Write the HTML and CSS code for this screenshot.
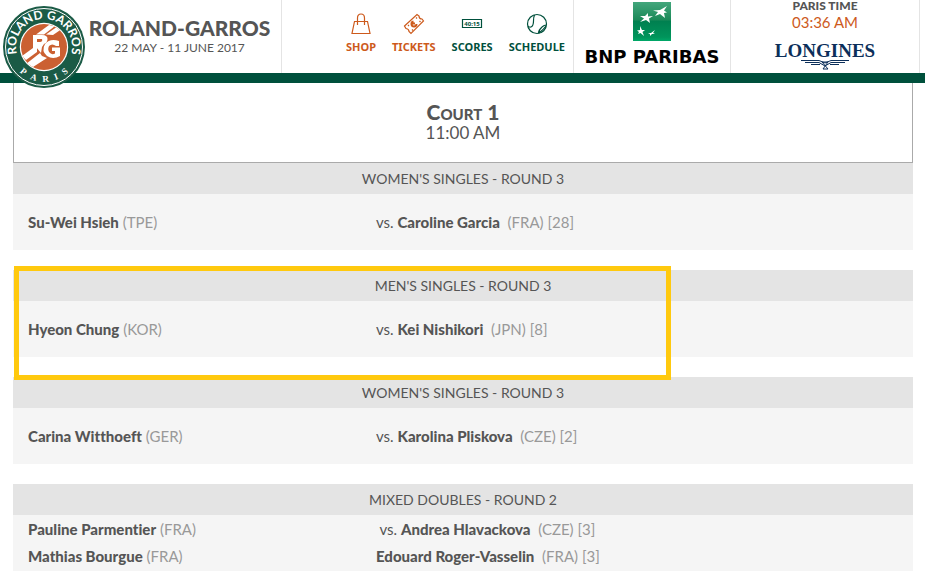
FILE: index.html
```
<!DOCTYPE html>
<html lang="en">
<head>
    <meta charset="UTF-8" />
    <meta name="viewport" content="width=device-width, initial-scale=1.0" />
    <title>Roland-Garros - Schedule</title>
    <link rel="stylesheet" href="styles.css">
</head>
<body>
    <header class="header">
        <div class="brand">
            <svg class="brand-logo" viewBox="0 0 84 84" role="img" aria-label="Roland Garros Paris">
                <defs>
                    <path id="arcTop" d="M 21.200 60.750 A 28 28 0 1 1 62.800 60.750" />
                    <path id="arcBottom" d="M 7 42 A 35 35 0 0 0 77 42" />
                    <clipPath id="disc"><circle cx="42" cy="42" r="23" /></clipPath>
                </defs>
                <circle cx="42" cy="42" r="41" fill="#1b5b46" />
                <circle cx="42" cy="42" r="38.5" fill="none" stroke="#fff" stroke-width="1" />
                <circle cx="42" cy="42" r="24.2" fill="#fff" />
                <circle cx="42" cy="42" r="23" fill="#cb6032" />
                <g clip-path="url(#disc)" fill="#fff">
                    <path d="M34 29.500 L47 20 L53 21 L42 29.500 Z" />
                    <path d="M44 29.500 L54 22.500 L59 24.500 L51 30 Z" />
                    <path d="M31 30 H40 Q46 30 45.500 34.500 Q45 38 42 39 L40 42 L39 48 L34 42 V37 H38 Q41 36.500 40 34 H35 V47 L24 55 L20 51 L31 43 Z" />
                    <path d="M24 59 L38 48 L40 51 L45 53 L31 62 Z" />
                    <path d="M57 36 V41 H54 Q50 38 47 41 Q45 45 48 48 Q50 50 53 48.500 V46 H50 V42.500 H58 V51 Q51 55 45 51 Q39 46 43 39 Q48 33 57 36 Z" />
                </g>
                <text class="logo-name"><textPath href="#arcTop" startOffset="50%" text-anchor="middle">ROLAND GARROS</textPath></text>
                <text class="logo-city"><textPath href="#arcBottom" startOffset="50%" text-anchor="middle">P&#160;&#160;&#160;A&#160;&#160;&#160;R&#160;&#160;&#160;I&#160;&#160;&#160;S</textPath></text>
            </svg>
            <div class="brand-text">
                <h1>ROLAND-GARROS</h1>
                <p>22 MAY - 11 JUNE 2017</p>
            </div>
        </div>

        <nav class="nav">
            <a href="#" class="orange">
                <svg width="22" height="22" viewBox="0 0 22 22">
                    <path d="M4.500 8.500 H17.500 L20 20.500 H2 Z M7.500 12 V5 Q7.500 1 11 1 Q14.500 1 14.500 5 V12" />
                </svg>
                SHOP
            </a>
            <a href="#" class="orange">
                <svg width="22" height="22" viewBox="0 0 22 22">
                    <path d="M1.500 13 L14 1.500 L16 3 Q16 6 19 6 L20.500 8 L8 20.500 L6 18.500 Q6 16 3 15.500 Z" />
                    <path d="M13.500 11 A2.500 2.500 0 1 1 10.500 8.500 M9.500 10.500 H12" stroke-width="2" />
                    <path d="M13 4.500 L14 5.500 M16.500 8 L17.500 9 M5 12 L6 13 M9 16.500 L10 17.500" />
                </svg>
                TICKETS
            </a>
            <a href="#">
                <svg width="22" height="22" viewBox="0 0 22 22">
                    <path d="M1.500 6.500 H20.500 V14.500 H1.500 Z" />
                    <text x="11" y="13" text-anchor="middle" class="icon-score">40:15</text>
                </svg>
                SCORES
            </a>
            <a href="#">
                <svg width="22" height="22" viewBox="0 0 22 22">
                    <circle cx="11" cy="11" r="9.500" />
                    <path d="M8.500 2 Q7.500 4 7.500 8 Q7.500 13 5 14 Q3 14.500 2 13 M20.500 12 Q18 12 16 14 Q12.500 17 12.500 20.500 M13 20 Q17 17 20 13" />
                </svg>
                SCHEDULE
            </a>
        </nav>

        <div class="sponsor">
            <svg width="38" height="39" viewBox="0 0 38 39" aria-hidden="true">
                <defs>
                    <linearGradient id="bnpGreen" x1="0" y1="0" x2="0" y2="1">
                        <stop offset="0" stop-color="#43a67c" />
                        <stop offset="0.45" stop-color="#1c8a59" />
                        <stop offset="0.5" stop-color="#008050" />
                        <stop offset="0.9" stop-color="#00945b" />
                        <stop offset="1" stop-color="#00a868" />
                    </linearGradient>
                </defs>
                <rect width="38" height="39" fill="url(#bnpGreen)" />
                <g fill="#fff">
                    <path d="M20 8.500 L27 8 L34 4 L31 8.500 L34 10.500 L31 11 L32 16 L27 12 L22 14 L25 10 Z" />
                    <path d="M7 14 L12 14 L15 11 L15 14.500 L20 14 L16 16.500 L17 21 L13 18 L7 20 L11 16.500 Z" />
                    <path d="M4 28.500 L7 28 L7 24 L9 28 L12 28 L9.500 30 L11 34 L7.500 31 L5 32 L6 30 Z" />
                    <path d="M15 31 L18 31 L22 28 L20 31 L22 32 L19 32 L17 34 L17 32 Z" />
                </g>
            </svg>
            <span class="bnp">BNP PARIBAS</span>
        </div>

        <div class="clock">
            <span class="clock-label">PARIS TIME</span>
            <span class="clock-time">03:36 AM</span>
            <span class="longines">LONGINES</span>
            <svg class="wings" width="48" height="10" viewBox="0 0 48 10" aria-hidden="true">
                <path d="M0 0.500 H18 L24 3 L30 0.500 H48 M4 2.500 H18 L24 6 L30 2.500 H44 M10 4.500 H19 M29 4.500 H38" />
                <path d="M21 2 H27 L22 9 H27 L21 2" />
            </svg>
        </div>
    </header>

    <main class="schedule">
        <div class="court">
            <h2>Court 1</h2>
            <p>11:00 AM</p>
        </div>

        <table class="match">
            <colgroup><col class="home"><col></colgroup>
            <thead>
                <tr><th colspan="2">WOMEN'S SINGLES - ROUND 3</th></tr>
            </thead>
            <tbody>
                <tr>
                    <td><b>Su-Wei Hsieh</b> <span>(TPE)</span></td>
                    <td>vs. <b>Caroline Garcia</b> &nbsp;<span>(FRA) [28]</span></td>
                </tr>
            </tbody>
        </table>

        <div class="highlight">
            <table class="match">
                <colgroup><col class="home"><col></colgroup>
                <thead>
                    <tr><th colspan="2">MEN'S SINGLES - ROUND 3</th></tr>
                </thead>
                <tbody>
                    <tr>
                        <td><b>Hyeon Chung</b> <span>(KOR)</span></td>
                        <td>vs. <b>Kei Nishikori</b> &nbsp;<span>(JPN) [8]</span></td>
                    </tr>
                </tbody>
            </table>
        </div>

        <table class="match">
            <colgroup><col class="home"><col></colgroup>
            <thead>
                <tr><th colspan="2">WOMEN'S SINGLES - ROUND 3</th></tr>
            </thead>
            <tbody>
                <tr>
                    <td><b>Carina Witthoeft</b> <span>(GER)</span></td>
                    <td>vs. <b>Karolina Pliskova</b> &nbsp;<span>(CZE) [2]</span></td>
                </tr>
            </tbody>
        </table>

        <table class="match">
            <colgroup><col class="home"><col></colgroup>
            <thead>
                <tr><th colspan="2">MIXED DOUBLES - ROUND 2</th></tr>
            </thead>
            <tbody>
                <tr>
                    <td>
                        <b>Pauline Parmentier</b> <span>(FRA)</span><br>
                        <b>Mathias Bourgue</b> <span>(FRA)</span>
                    </td>
                    <td>
                        &nbsp;vs. <b>Andrea Hlavackova</b> &nbsp;<span>(CZE) [3]</span><br>
                        <b>Edouard Roger-Vasselin</b> &nbsp;<span>(FRA) [3]</span>
                    </td>
                </tr>
            </tbody>
        </table>
    </main>
</body>
</html>
```
FILE: styles.css
```
body {
    margin: 0;
    background: #fff;
    color: #555;
    font-family: Lato, "Open Sans", sans-serif;
    font-size: 15px;
    font-variant-ligatures: none;
}

h1, h2, p {
    margin: 0;
}

/* header */
.header {
    display: flex;
    box-sizing: border-box;
    height: 83px;
    padding-right: 5px;
    border-bottom: 10px solid #00503c;
}

.brand,
.nav,
.sponsor,
.clock {
    box-sizing: border-box;
    border-right: 1px solid #e4e4e4;
}

.brand {
    position: relative;
    width: 282px;
    padding: 16px 10px 0 88px;
}

.brand-logo {
    position: absolute;
    left: 2px;
    top: 5px;
    width: 84px;
    height: 84px;
}

.brand-logo text {
    fill: #fff;
    font-weight: bold;
}

.logo-name {
    font-family: Lato, sans-serif;
    font-size: 12px;
}

.logo-city {
    font-family: "Liberation Serif", serif;
    font-size: 9px;
}

.brand-text {
    text-align: center;
}

.brand-text h1 {
    font-size: 21px;
    line-height: 24px;
    font-weight: 900;
}

.brand-text p {
    font-size: 12px;
    line-height: 16px;
}

.nav {
    display: flex;
    flex: 1;
    justify-content: flex-end;
    gap: 16px;
    padding: 13px 8px 0 0;
}

.nav a {
    display: flex;
    flex-direction: column;
    align-items: center;
    gap: 4px;
    color: #00503c;
    font-family: "Noto Sans", sans-serif;
    font-size: 11px;
    line-height: 16px;
    font-weight: bold;
    text-decoration: none;
}

.nav a.orange {
    color: #cd5a1c;
}

.nav svg {
    fill: none;
    stroke: currentColor;
    stroke-width: 1.2;
}

.nav .icon-score {
    fill: currentColor;
    stroke: none;
    font-size: 6px;
}

.sponsor {
    display: flex;
    flex-direction: column;
    align-items: center;
    width: 157px;
    padding-top: 2px;
}

.bnp {
    color: #000;
    font-family: "DejaVu Sans", sans-serif;
    font-size: 18px;
    line-height: 32px;
    font-weight: bold;
    white-space: nowrap;
}

.clock {
    display: flex;
    flex-direction: column;
    align-items: center;
    width: 189px;
}

.clock-label {
    font-size: 12px;
    line-height: 12px;
    font-weight: 900;
}

.clock-time {
    color: #cd5a1c;
    font-size: 15px;
    line-height: 20px;
}

.longines {
    margin-top: 10px;
    color: #0c2f5a;
    font-family: "Liberation Serif", serif;
    font-size: 19px;
    line-height: 18px;
    font-weight: bold;
}

.wings {
    fill: none;
    stroke: #0c2f5a;
}

/* schedule */
.schedule {
    margin: 0 12px 0 13px;
}

.court {
    box-sizing: border-box;
    height: 80px;
    padding-top: 18px;
    border: 1px solid #aaa;
    border-top: 0;
    text-align: center;
}

.court h2 {
    font-size: 21px;
    line-height: 22px;
    font-weight: 900;
    font-variant-caps: small-caps;
}

.court p {
    font-size: 17px;
    line-height: 20px;
}

.match {
    width: 100%;
    margin-bottom: 20px;
    border-collapse: collapse;
    table-layout: fixed;
}

.match .home {
    width: 39%;
}

.match th {
    height: 31px;
    padding: 0;
    background: #e4e4e4;
    font-size: 14px;
    font-weight: normal;
}

.match td {
    height: 56px;
    padding: 0 12px;
    background: #f5f5f5;
    line-height: 27px;
}

.match td:first-child {
    padding-left: 15px;
}

.match b {
    font-weight: 900;
}

.match span {
    color: #999;
}

.highlight {
    position: relative;
}

.highlight::after {
    content: '';
    position: absolute;
    top: -4px;
    bottom: -23px;
    left: 1px;
    box-sizing: border-box;
    width: 73%;
    border: 5px solid #ffc90e;
    pointer-events: none;
}
```
